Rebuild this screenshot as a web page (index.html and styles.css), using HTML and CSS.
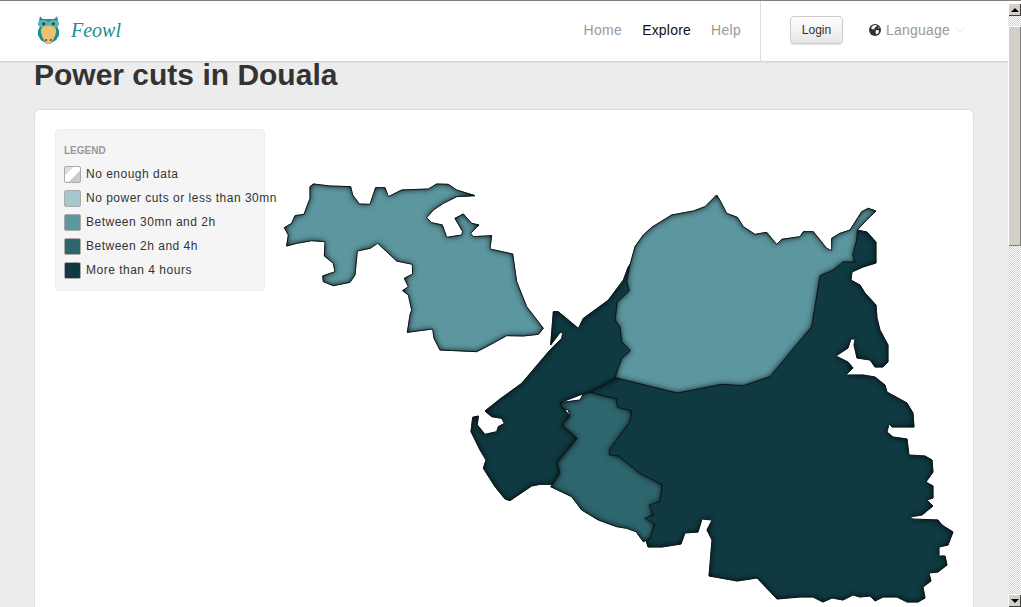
FILE: index.html
```html
<!DOCTYPE html>
<html lang="en">
<head>
<meta charset="utf-8">
<title>Feowl - Power cuts in Douala</title>
<link rel="stylesheet" href="styles.css">
</head>
<body>
<div class="page">
  <header class="navbar">
    <a class="brand">
      <svg class="owl" viewBox="0 0 24 32" width="23" height="31">
        <path d="M3 1l3 3h12l3-3 1 6-1 5 2 4v5l-3 5-5 3-2 1h-2l-2-1-5-3-3-5v-5l2-4-1-5z" fill="#1b8b97"/>
        <path d="M1 9c0-3 3-4 6-4 2 0 4 1 5 2 1-1 3-2 5-2 3 0 6 1 6 4s-3 4-6 4c-2 0-4-1-5-2-1 1-3 2-5 2-3 0-6-1-6-4z" fill="#5cb4ae"/>
        <path d="M12 11c3 0 8 1 8 5 0 4-2 8-4 11-1 2-2 3-4 3s-3-1-4-3c-2-3-4-7-4-11 0-4 5-5 8-5z" fill="#ecbf72"/>
        <circle cx="7" cy="9" r="1.7" fill="#27474c"/>
        <circle cx="17" cy="9" r="1.7" fill="#27474c"/>
        <circle cx="9.500" cy="26" r="1.1" fill="#5a4a30"/>
        <circle cx="14.500" cy="26" r="1.1" fill="#5a4a30"/>
      </svg>
      <span class="brand-name">Feowl</span>
    </a>
    <nav class="nav-links">
      <a class="nav-link">Home</a>
      <a class="nav-link active">Explore</a>
      <a class="nav-link">Help</a>
    </nav>
    <div class="nav-right">
      <button class="login">Login</button>
      <a class="lang">
        <svg class="globe" viewBox="0 0 12 12" width="12" height="12">
          <circle cx="6" cy="6" r="6" fill="#333"/>
          <path d="M4 1.500l3-.5 1 1-2 1.500-1 2-2-.5-1-1zM7 6l3 .5-.5 2.500-2 1.500-1-2zM9 2.500l1.500 1.500-1 .5z" fill="#fff"/>
        </svg>
        <span>Language</span>
        <svg class="chev" viewBox="0 0 8 5" width="8" height="5"><path d="M.5.5L4 4 7.500.5" fill="none" stroke="#e2e2e2"/></svg>
      </a>
    </div>
  </header>
  <main class="content">
    <h1 class="title">Power cuts in Douala</h1>
    <section class="card">
      <aside class="legend">
        <h2 class="legend-title">LEGEND</h2>
        <ul class="legend-list">
          <li class="legend-row"><i class="swatch s0"></i>No enough data</li>
          <li class="legend-row"><i class="swatch s1"></i>No power cuts or less than 30mn</li>
          <li class="legend-row"><i class="swatch s2"></i>Between 30mn and 2h</li>
          <li class="legend-row"><i class="swatch s3"></i>Between 2h and 4h</li>
          <li class="legend-row"><i class="swatch s4"></i>More than 4 hours</li>
        </ul>
      </aside>
      <svg class="map" viewBox="35 110 938 520" width="938" height="520">
        <defs>
          <filter id="inset" x="-5%" y="-5%" width="110%" height="110%" color-interpolation-filters="sRGB">
            <feGaussianBlur in="SourceAlpha" stdDeviation="3.2" result="blur"/>
            <feComposite in="SourceAlpha" in2="blur" operator="out" result="edge"/>
            <feFlood flood-color="#000" flood-opacity="1"/>
            <feComposite in2="edge" operator="in" result="shade"/>
            <feMerge><feMergeNode in="SourceGraphic"/><feMergeNode in="shade"/></feMerge>
          </filter>
        </defs>
        <g class="region r4" filter="url(#inset)">
          <polygon transform="translate(460 300) scale(.33333)" points="280,35 295,35 355,85 370,55 425,15 445,0 490,-60 505,-100 530,-130 560,-120 600,0 560,240 465,238 390,277 360,285 300,308 330,350 305,375 352,415 292,488 300,520 278,553 240,553 215,558 150,602 135,597 105,560 70,505 78,480 60,450 33,395 38,352 55,348 52,375 75,403 110,395 115,380 133,370 125,355 95,350 75,333 120,297 185,250 270,150 305,115 308,97 300,98 272,135"/>
        </g>
        <g class="region r4" filter="url(#inset)">
          <polygon points="857,230 867,232 876,242 876,263 863,267 852,272 851,280 860,285 865,293 876,305 877,318 880,330 888,345 888,362 883,367 875,367 870,360 857,358 854,345 855,339 851,339 848,348 836,356 848,362 853,368 846,375 863,375 875,377 885,385 887,392 907,403 913,413 914,427 892,427 889,424 887,432 893,437 907,439 909,455 925,456 932,460 933,472 926,482 933,486 933,498 927,500 933,506 922,515 910,517 913,519 938,520 942,525 953,532 948,545 939,547 939,556 945,556 947,565 938,572 929,573 931,581 923,587 925,598 918,602 907,602 897,597 883,597 875,601 870,596 860,597 853,595 843,600 832,598 823,602 813,597 800,597 777,599 757,578 737,581 715,577 709,576 712,540 707,530 712,520 702,519 698,532 685,533 681,544 662,547 648,547 640,520 610,480 590,430 590,400 590,392 615,379 700,340 800,290 820,270"/>
        </g>
        <g class="region r3" filter="url(#inset)">
          <polygon transform="translate(460 300) scale(.33333)" points="300,308 360,300 370,282 390,277 470,297 472,322 515,332 510,365 448,450 448,465 475,468 540,520 607,555 600,605 567,615 580,645 553,655 585,672 578,690 570,715 550,725 528,695 500,685 470,680 415,660 365,630 335,590 272,560 278,553 300,520 292,488 352,415 305,375 330,350 325,330 307,325"/>
        </g>
        <g class="region r2" filter="url(#inset)">
          <polygon transform="translate(600 185) scale(.33333)" points="350,30 362,50 380,85 412,97 430,125 465,148 500,142 530,178 545,163 600,155 610,140 640,140 680,190 695,197 695,160 720,145 750,135 785,80 805,70 828,78 800,105 772,135 770,165 758,210 765,232 730,230 700,255 660,272 635,425 510,575 430,602 365,598 232,624 45,578 65,520 92,497 65,470 60,425 45,405 52,350 88,318 80,290 90,240 105,185 130,150 155,127 215,90 280,78 315,65"/>
        </g>
        <g class="region r2" filter="url(#inset)">
          <polygon transform="translate(280 175) scale(.33333)" points="90,35 100,27 150,33 212,35 218,60 238,87 270,88 287,38 315,38 325,65 365,45 445,42 470,27 505,28 530,45 585,62 530,65 490,85 460,105 440,128 455,143 487,150 500,187 545,180 548,170 525,130 550,117 575,145 597,150 572,175 580,185 635,182 630,222 698,237 710,320 740,395 790,460 775,478 730,483 680,482 620,515 590,530 480,525 462,490 458,462 382,472 390,420 395,405 385,360 368,347 385,335 373,310 398,297 397,268 350,258 293,205 270,220 232,228 225,300 210,322 160,332 130,320 128,303 165,290 160,265 133,243 135,200 95,197 50,205 20,213 25,180 13,158 35,145 45,122 72,118 90,70"/>
        </g>
      </svg>
    </section>
  </main>
</div>
<div class="scrollbar">
  <div class="sb-btn"><span class="arrow up"></span></div>
  <div class="sb-gap"></div>
  <div class="sb-thumb"></div>
  <div class="sb-track"></div>
  <div class="sb-btn"><span class="arrow down"></span></div>
</div>
</body>
</html>
```
FILE: styles.css
```css
* { box-sizing: border-box; }
html, body { height: 100%; }
body {
  margin: 0;
  display: flex;
  height: 100vh;
  overflow: hidden;
  border-top: 1px solid #808080;
  background: #ececec;
  font-family: "Liberation Sans", Arial, sans-serif;
  color: #333;
}
.page { flex: 1; min-width: 0; overflow: hidden; }
.navbar {
  display: flex;
  align-items: center;
  height: 60px;
  background: #fff;
  box-shadow: 0 1px 2px rgba(0,0,0,.14);
  position: relative;
}
.brand { display: flex; align-items: center; margin: 0 0 2px 37px; }
.owl { display: block; }
.brand-name {
  margin-left: 11px;
  font: italic 20px/30px "Liberation Serif", serif;
  color: #1b8b97;
}
.nav-links { display: flex; gap: 20px; margin: 0 19px 2px auto; }
.nav-link { font-size: 14px; line-height: 20px; color: #999; letter-spacing: .3px; }
.nav-link.active { color: #111; letter-spacing: .2px; }
.nav-right {
  display: flex;
  align-items: center;
  width: 248px;
  height: 60px;
  padding: 0 0 2px 29px;
  border-left: 1px solid #ddd;
}
.login {
  width: 53px;
  height: 28px;
  padding: 0;
  border: 1px solid #ccc;
  border-radius: 4px;
  background: linear-gradient(#fff, #e6e6e6);
  box-shadow: 0 1px 1px rgba(0,0,0,.1);
  font: 12px "Liberation Sans", Arial, sans-serif;
  color: #333;
}
.lang { display: flex; align-items: center; margin-left: 26px; font-size: 14px; color: #999; letter-spacing: .2px; }
.globe { margin-right: 5px; }
.chev { margin-left: 6px; }
.content { padding: 0 34px; }
.title {
  margin: 0;
  font-size: 30px;
  line-height: 28px;
  font-weight: bold;
  color: #333;
}
.card {
  position: relative;
  height: 540px;
  margin-top: 20px;
  background: #fff;
  border: 1px solid #ddd;
  border-radius: 6px;
  overflow: hidden;
}
.legend {
  position: absolute;
  left: 20px;
  top: 19px;
  width: 210px;
  height: 162px;
  padding: 15px 8px;
  background: #f5f5f5;
  border: 1px solid #eee;
  border-radius: 4px;
}
.legend-title { margin: 0 0 5px; font-size: 10px; line-height: 12px; font-weight: bold; color: #999; }
.legend-list { margin: 0; padding: 0; list-style: none; }
.legend-row {
  display: flex;
  align-items: center;
  height: 24px;
  font-size: 12px;
  letter-spacing: .5px;
  white-space: nowrap;
  color: #333;
}
.swatch {
  flex: none;
  width: 17px;
  height: 17px;
  margin-right: 5px;
  border: 1px solid #aaa;
  border-radius: 2px;
}
.s0 { background: linear-gradient(135deg, #ddd 0 28%, #fff 28% 62%, #ccc 62%); }
.s1 { background: #a3c9cc; }
.s2 { background: #5c969f; }
.s3 { background: #2e666e; }
.s4 { background: #0f3a42; }
.map { display: block; }
.region polygon {
  stroke: #16282c;
  stroke-width: 1;
  stroke-linejoin: round;
  vector-effect: non-scaling-stroke;
}
.r2 polygon { fill: #5c969f; }
.r3 polygon { fill: #2e666e; }
.r4 polygon { fill: #0f3a42; }
.scrollbar {
  flex: none;
  display: flex;
  flex-direction: column;
  width: 13px;
  height: 100%;
  padding-top: 2px;
  background: #fff;
}
.sb-btn {
  flex: none;
  display: flex;
  align-items: center;
  justify-content: center;
  height: 13px;
  background: #d4d0c8;
  box-shadow: inset 1px 1px 0 #fff, inset -1px -1px 0 #404040;
}
.arrow { width: 0; height: 0; border-left: 4px solid transparent; border-right: 4px solid transparent; }
.arrow.up { border-bottom: 4px solid #000; }
.arrow.down { border-top: 4px solid #000; }
.sb-gap, .sb-track {
  background-color: #f4f3f0;
  background-image: conic-gradient(#d4d0c8 25%, #fff 0 50%, #d4d0c8 0 75%, #fff 0);
  background-size: 2px 2px;
}
.sb-gap { flex: none; height: 10px; }
.sb-thumb {
  flex: none;
  height: 220px;
  background: #d4d0c8;
  box-shadow: inset 1px 1px 0 #fff, inset -1px -1px 0 #808080;
}
.sb-track { flex: 1; }
```
